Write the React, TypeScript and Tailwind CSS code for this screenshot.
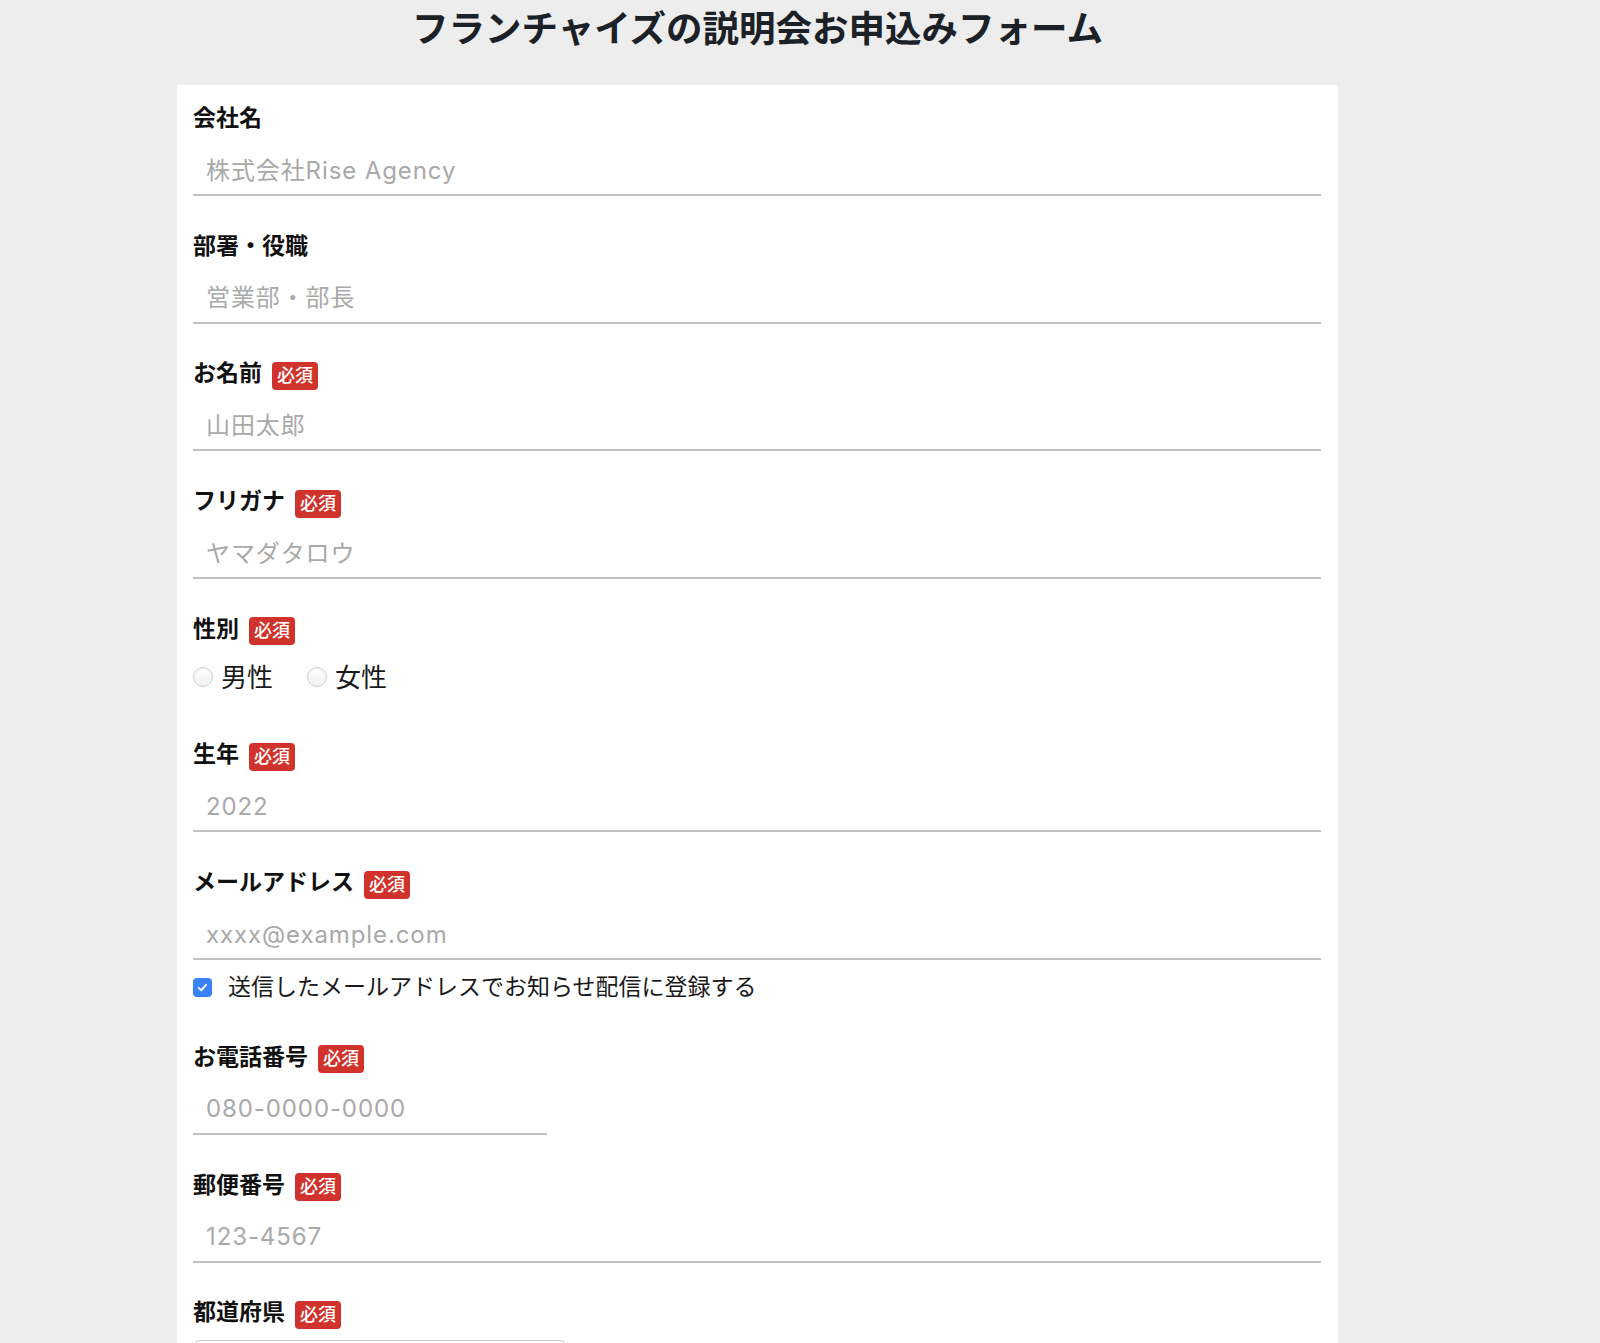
import { useState } from 'react'

const fieldsTop = [
  { label: '会社名', placeholder: '株式会社Rise Agency', required: false },
  { label: '部署・役職', placeholder: '営業部・部長', required: false },
  { label: 'お名前', placeholder: '山田太郎', required: true },
  { label: 'フリガナ', placeholder: 'ヤマダタロウ', required: true },
]

function Badge() {
  return (
    <span className="ml-[10px] mt-[4px] inline-flex h-[28px] items-center rounded-[4px] bg-[#d0332b] px-[5px] text-[18px] font-medium leading-[28px] text-white">
      必須
    </span>
  )
}

function Label({ text, required }: { text: string; required?: boolean }) {
  return (
    <div className="flex h-[33px] items-center">
      <span className="text-[23px] font-bold leading-[33px] text-[#111]">{text}</span>
      {required && <Badge />}
    </div>
  )
}

function TextInput({ placeholder, className = 'w-full' }: { placeholder: string; className?: string }) {
  return (
    <input
      type="text"
      placeholder={placeholder}
      className={`mt-[11px] block h-[50px] border-b-2 border-[#c2c2c2] bg-transparent pl-[13px] text-[24px] tracking-[0.9px] text-[#111] outline-none placeholder:text-[#a9a9a9] ${className}`}
    />
  )
}

function Radio({ label, checked, onChange }: { label: string; checked: boolean; onChange: () => void }) {
  return (
    <label className="flex cursor-pointer items-center">
      <input
        type="radio"
        name="gender"
        checked={checked}
        onChange={onChange}
        className="h-[20px] w-[20px] appearance-none rounded-full border border-[#cfcfcf] bg-gradient-to-b from-white to-[#f1f1f1] shadow-[inset_0_1px_1px_rgba(0,0,0,0.06)] checked:border-[6px] checked:border-[#3a82f7]"
      />
      <span className="ml-[8px] text-[26px] leading-[37px] text-[#1a1a1a]">{label}</span>
    </label>
  )
}

export default function App() {
  const [gender, setGender] = useState('')
  const [subscribe, setSubscribe] = useState(true)

  return (
    <div className="min-h-screen bg-[#ededed] font-['Inter','Noto_Sans_CJK_JP',sans-serif]">
      <div className="pl-[177px]">
        <div className="w-[1161px]">
          <h1 className="mb-[27px] text-center text-[36.5px] font-bold leading-[58px] text-[#1b2126]">
            フランチャイズの説明会お申込みフォーム
          </h1>

          <form className="flex flex-col gap-[33.7px] bg-white pb-[40px] pl-[16px] pr-[17px] pt-[17px]">
            {fieldsTop.map((f) => (
              <div key={f.label}>
                <Label text={f.label} required={f.required} />
                <TextInput placeholder={f.placeholder} />
              </div>
            ))}

            {/* 性別 */}
            <div>
              <Label text="性別" required />
              <div className="mb-[9px] mt-[13px] flex h-[37px] items-center gap-[34px]">
                <Radio label="男性" checked={gender === 'male'} onChange={() => setGender('male')} />
                <Radio label="女性" checked={gender === 'female'} onChange={() => setGender('female')} />
              </div>
            </div>

            <div>
              <Label text="生年" required />
              <TextInput placeholder="2022" />
            </div>

            {/* メールアドレス */}
            <div>
              <Label text="メールアドレス" required />
              <TextInput placeholder="xxxx@example.com" />
              <label className="mt-[7px] flex h-[40px] cursor-pointer items-center">
                <input
                  type="checkbox"
                  checked={subscribe}
                  onChange={() => setSubscribe(!subscribe)}
                  className="sr-only"
                />
                <span
                  className={`flex h-[19px] w-[19px] items-center justify-center rounded-[4px] ${
                    subscribe ? 'bg-[#3a82f7]' : 'border border-[#cfcfcf] bg-white'
                  }`}
                >
                  {subscribe && (
                    <svg viewBox="0 0 16 16" className="h-[13px] w-[13px]" fill="none">
                      <path d="M3.5 8.5 L6.5 11.5 L12.5 4.5" stroke="white" strokeWidth="2.2" strokeLinecap="round" strokeLinejoin="round" />
                    </svg>
                  )}
                </span>
                <span className="ml-[16px] text-[23px] leading-[33px] text-[#1a1a1a]">
                  送信したメールアドレスでお知らせ配信に登録する
                </span>
              </label>
            </div>

            <div>
              <Label text="お電話番号" required />
              <TextInput placeholder="080-0000-0000" className="w-[354px]" />
            </div>

            <div>
              <Label text="郵便番号" required />
              <TextInput placeholder="123-4567" />
            </div>

            <div>
              <Label text="都道府県" required />
              <select className="mt-[11px] block h-[48px] w-[374px] appearance-none rounded-[8px] border border-[#c8c8c8] bg-gradient-to-b from-white to-[#f3f3f3] px-[13px] text-[22px] text-[#111] outline-none">
                <option>選択してください</option>
              </select>
            </div>
          </form>
        </div>
      </div>
    </div>
  )
}
